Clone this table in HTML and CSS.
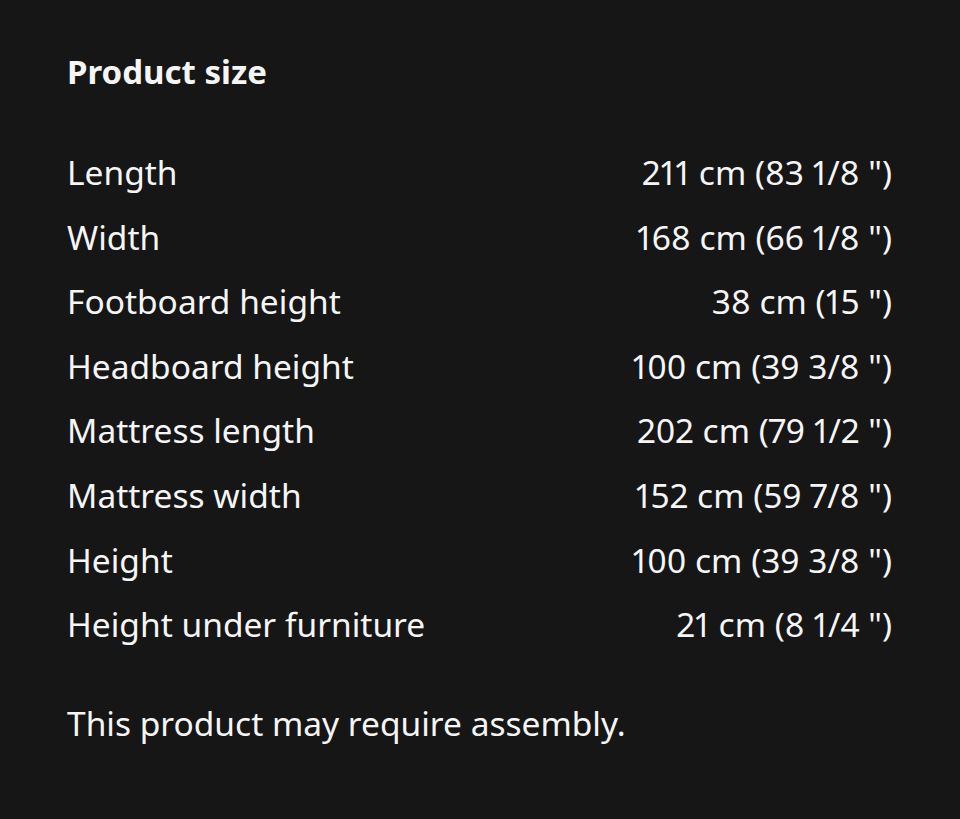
FILE: index.html
```html
<!DOCTYPE html>
<html>
<head>
<meta charset="utf-8">
<link rel="stylesheet" href="styles.css">
</head>
<body>
<section class="panel">
  <h2 class="title">Product size</h2>
  <dl class="specs">
    <div class="row"><dt>Length</dt><dd>211 cm (83 1/8 ")</dd></div>
    <div class="row"><dt>Width</dt><dd>168 cm (66 1/8 ")</dd></div>
    <div class="row"><dt>Footboard height</dt><dd>38 cm (15 ")</dd></div>
    <div class="row"><dt>Headboard height</dt><dd>100 cm (39 3/8 ")</dd></div>
    <div class="row"><dt>Mattress length</dt><dd>202 cm (79 1/2 ")</dd></div>
    <div class="row"><dt>Mattress width</dt><dd>152 cm (59 7/8 ")</dd></div>
    <div class="row"><dt>Height</dt><dd>100 cm (39 3/8 ")</dd></div>
    <div class="row"><dt>Height under furniture</dt><dd>21 cm (8 1/4 ")</dd></div>
  </dl>
  <p class="note">This product may require assembly.</p>
</section>
</body>
</html>
```
FILE: styles.css
```css
html, body {
  margin: 0;
  padding: 0;
  background: #161616;
}
body {
  color: #f5f5f5;
  font-family: "Noto Sans", "Open Sans", sans-serif;
  width: 960px;
  height: 819px;
  overflow: hidden;
}
.panel {
  padding: 52px 68px 0 67px;
}
.title {
  margin: 0;
  font-size: 33px;
  font-weight: 700;
  line-height: 40px;
}
.specs {
  margin: 48px 0 0;
}
.row {
  display: flex;
  justify-content: space-between;
  font-size: 33.5px;
  line-height: 64.6px;
}
.row dt, .row dd {
  margin: 0;
}
.row dd {
  font-variant-numeric: proportional-nums;
}
.note {
  margin: 46px 0 0;
  font-size: 33.5px;
  line-height: 40px;
}
```
